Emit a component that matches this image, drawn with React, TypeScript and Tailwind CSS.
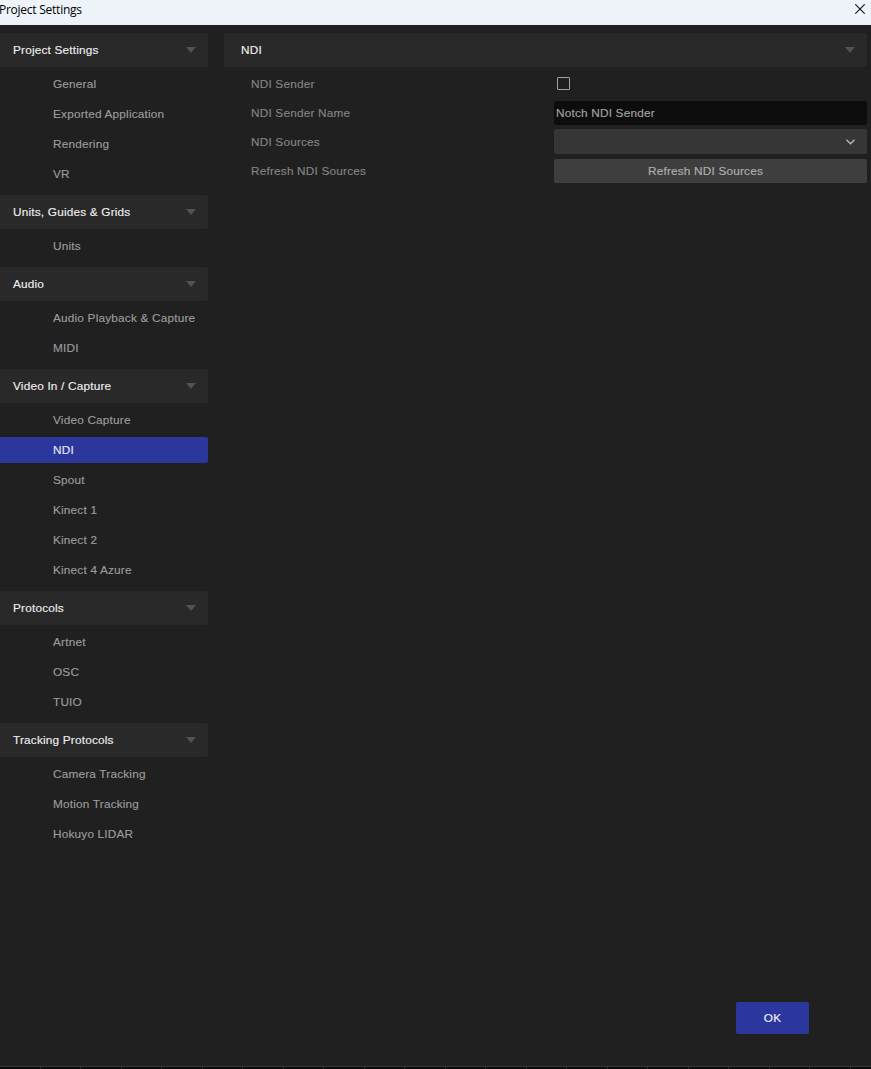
import { useState } from 'react';

interface Section {
  title: string;
  items: string[];
}

const SECTIONS: Section[] = [
  { title: 'Project Settings', items: ['General', 'Exported Application', 'Rendering', 'VR'] },
  { title: 'Units, Guides & Grids', items: ['Units'] },
  { title: 'Audio', items: ['Audio Playback & Capture', 'MIDI'] },
  { title: 'Video In / Capture', items: ['Video Capture', 'NDI', 'Spout', 'Kinect 1', 'Kinect 2', 'Kinect 4 Azure'] },
  { title: 'Protocols', items: ['Artnet', 'OSC', 'TUIO'] },
  { title: 'Tracking Protocols', items: ['Camera Tracking', 'Motion Tracking', 'Hokuyo LIDAR'] },
];

function Triangle() {
  return (
    <svg className="h-[6px] w-[10px] shrink-0" viewBox="0 0 10 6">
      <path d="M0 0H10L5 6Z" fill="#525252" />
    </svg>
  );
}

export default function App() {
  const [selected, setSelected] = useState('NDI');
  const [senderOn, setSenderOn] = useState(false);
  const [senderName, setSenderName] = useState('Notch NDI Sender');

  return (
    <div className="flex h-screen w-full flex-col overflow-hidden bg-[#202020] font-['Liberation_Sans',Arial,sans-serif] text-[11.8px] leading-[14px] tracking-[0.19px] text-[#9c9c9c] [-webkit-text-stroke:0.15px]">
      {/* Title bar */}
      <div className="flex h-[25px] shrink-0 items-start justify-between bg-[#eef3f9] pr-[6px] text-black">
        <span className="-ml-px pt-[2px] font-['Open_Sans',sans-serif] text-[12px] leading-4 tracking-[-0.25px] [-webkit-text-stroke:0px]">Project Settings</span>
        <button className="mt-[4px]" aria-label="Close">
          <svg className="h-[10px] w-[10px]" viewBox="0 0 10 10" fill="none" stroke="#111" strokeWidth="1.1">
            <path d="M0.3 0.3L9.7 9.7M9.7 0.3L0.3 9.7" />
          </svg>
        </button>
      </div>

      <div className="flex min-h-0 flex-1 gap-4 pt-2 pr-1">
        {/* Sidebar */}
        <div className="flex w-[208px] shrink-0 flex-col gap-2">
          {SECTIONS.map((section) => (
            <div key={section.title} className="flex flex-col gap-1">
              <div className="flex h-[34px] items-center justify-between rounded-r-[2px] bg-[#292929] pr-3 pl-[13px] text-[#eeeeee]">
                <span>{section.title}</span>
                <Triangle />
              </div>
              {section.items.map((item) => (
                <button
                  key={item}
                  onClick={() => setSelected(item)}
                  className={`h-[26px] rounded-r-[2px] pl-[53px] text-left whitespace-nowrap ${
                    selected === item ? 'bg-[#2b379d] text-[#e6e6f2]' : ''
                  }`}
                >
                  {item}
                </button>
              ))}
            </div>
          ))}
        </div>

        {/* Properties */}
        <div className="flex flex-1 flex-col">
          <div className="flex h-[34px] items-center justify-between rounded-[2px] bg-[#292929] pr-3 pl-[17px] text-[#eeeeee]">
            <span>NDI</span>
            <Triangle />
          </div>
          <div className="mt-[5px] grid auto-rows-[24px] grid-cols-[303px_1fr] items-center gap-y-[5px] pl-[27px] text-[#848484]">
            <span>NDI Sender</span>
            <button
              onClick={() => setSenderOn(!senderOn)}
              className={`mb-px ml-[3px] h-[13px] w-[13px] rounded-[1px] border border-[#a0a0a0] ${senderOn ? 'bg-[#2b379d]' : ''}`}
              aria-label="NDI Sender"
            />
            <span>NDI Sender Name</span>
            <input
              value={senderName}
              onChange={(e) => setSenderName(e.target.value)}
              className="h-6 w-full rounded-[2px] bg-[#0d0d0d] pl-[2px] text-[#a3a3a3] outline-none"
            />
            <span>NDI Sources</span>
            <button className="mb-px flex h-[25px] items-center justify-end rounded-[2px] bg-[#363636] pr-3" aria-label="NDI Sources">
              <svg className="h-[6px] w-[9px]" viewBox="0 0 9 6" fill="none" stroke="#b8b8b8" strokeWidth="1.4">
                <path d="M0.5 0.7L4.5 4.7L8.5 0.7" />
              </svg>
            </button>
            <span>Refresh NDI Sources</span>
            <button className="h-6 rounded-[2px] bg-[#3e3e3e] pr-[10px] text-[#b0b0b0]">Refresh NDI Sources</button>
          </div>
        </div>
      </div>

      {/* Footer */}
      <div className="flex shrink-0 justify-end pr-[62px] pb-8">
        <button className="h-8 w-[73px] rounded-[2px] bg-[#2b379d] text-[#f0f0f8]">OK</button>
      </div>
      <div className="flex h-[3px] shrink-0 border-t border-[#383838] bg-[#0c0a0c]">
        {Array.from({ length: 21 }, (_, i) => (
          <div key={i} className="w-[40.5px] shrink-0 border-r border-[#2a2a2a]" />
        ))}
      </div>
    </div>
  );
}
